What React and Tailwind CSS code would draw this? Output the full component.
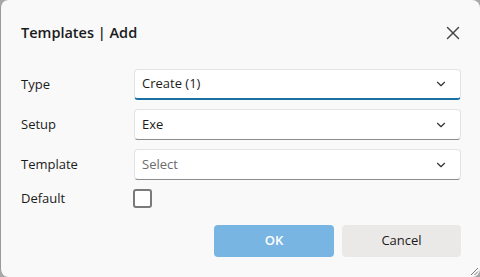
import { X, ChevronDown } from 'lucide-react';

function Select({ value, placeholder, focused }) {
  return (
    <div
      className={`relative flex h-[31px] flex-1 items-center justify-between rounded-[4px] border border-[#e3e3e3] bg-white pl-[7px] pr-[12px] ${
        focused ? 'border-b-[2px] border-b-[#1a6fa3]' : 'border-b-[#8c8c8c]'
      }`}
    >
      <span className={`text-[13px] ${placeholder ? 'text-[#6b6b6b]' : 'text-[#1b1b1b]'}`}>
        {value || placeholder}
      </span>
      <ChevronDown size={14} strokeWidth={2} className="text-[#333]" />
    </div>
  );
}

function Row({ label, children }) {
  return (
    <div className="flex items-center">
      <div className="w-[113px] text-[13px] text-[#1b1b1b]">{label}</div>
      {children}
    </div>
  );
}

export default function App() {
  return (
    <div className="h-[277px] w-[480px] bg-[#a8a8a8]" style={{ fontFamily: '"Open Sans", "Noto Sans", sans-serif' }}>
      <div className="relative flex h-full w-full flex-col rounded-[8px] border-l border-[#9a9a9a] bg-[#f9f9f9] pl-[20px] pr-[19px]">
        <div className="flex h-[66px] items-center justify-between pb-[1px]">
          <h1 className="text-[14.5px] font-semibold text-[#1b1b1b]">Templates | Add</h1>
          <X size={22} strokeWidth={1.5} className="-mr-[3px] text-[#444]" />
        </div>
        <div className="flex flex-col gap-[9px] pt-[3px]">
          <Row label="Type">
            <Select value="Create (1)" focused />
          </Row>
          <Row label="Setup">
            <Select value="Exe" />
          </Row>
          <Row label="Template">
            <Select placeholder="Select" />
          </Row>
          <Row label="Default">
            <div className="-ml-[1px] h-[19px] w-[19px] rounded-[3px] border-[2px] border-[#7a7a7a] bg-white" />
          </Row>
        </div>
        <div className="mt-[16px] flex justify-end gap-[8px]">
          <button className="h-[32px] w-[120px] rounded-[4px] bg-[#78b5e3] text-[13px] font-semibold text-white">OK</button>
          <button className="h-[32px] w-[119px] rounded-[4px] bg-[#ebe9e7] text-[13px] text-[#1b1b1b]">Cancel</button>
        </div>
        <svg className="absolute bottom-[1px] right-[1px]" width="9" height="9" viewBox="0 0 9 9">
          <path d="M8 1 L1 8 M8 4.5 L4.5 8" stroke="#777" strokeWidth="1" />
        </svg>
      </div>
    </div>
  );
}
